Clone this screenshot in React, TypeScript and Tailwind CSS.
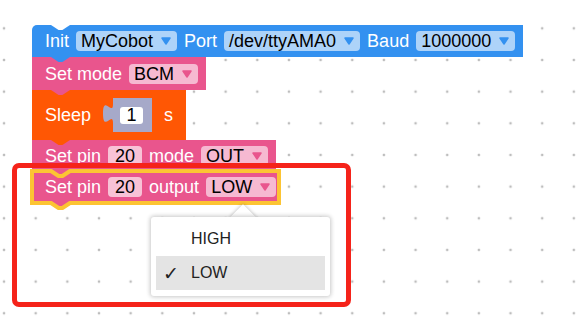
import React from "react";

const BLUE = "#3391f0";
const PINK = "#e9558d";
const ORANGE = "#ff5704";
const YELLOW = "#fcc433";

function Caret({ color }: { color: string }) {
  return (
    <svg width="10" height="8" viewBox="0 0 10 8" className="shrink-0">
      <path d="M1 1 H9 L5 7 Z" fill={color} stroke={color} strokeWidth="1.5" strokeLinejoin="round" />
    </svg>
  );
}

function Tab({ color }: { color: string }) {
  return (
    <svg width="19" height="6" viewBox="0 0 19 6" className="absolute left-[19px] top-[calc(100%-1px)] z-10">
      <path d="M0 0 L0 1 L7.6 6 L11.4 6 L19 1 L19 0 Z" fill={color} />
    </svg>
  );
}

function HiNotch({ pos }: { pos: "top" | "bottom" }) {
  return (
    <svg
      width="27"
      height="11"
      viewBox="0 -3 27 11"
      className={
        pos === "top"
          ? "absolute left-[15px] top-[-3px] z-10"
          : "absolute left-[15px] top-[calc(100%-3px)] z-10"
      }
    >
      <path d="M4.5 -3 L22.5 -3 L22.5 0 L15.4 5 L11.6 5 L4.5 0 Z" fill={PINK} />
      <path d="M0 0 L4 0 L11.6 5 L15.4 5 L23 0 L27 0" fill="none" stroke={YELLOW} strokeWidth="4" strokeLinejoin="round" />
    </svg>
  );
}

function Drop({ label, color, bg }: { label: string; color: string; bg: string }) {
  return (
    <div className={`flex h-[20px] items-center gap-[8px] rounded-[4px] pl-[5px] pr-[6px] text-black ${bg}`}>
      <span className="leading-none">{label}</span>
      <Caret color={color} />
    </div>
  );
}

function Num({ value }: { value: string }) {
  return (
    <div className="flex h-[20px] items-center rounded-[4px] bg-[#f8c2d6] px-[7px] text-black">
      <span className="leading-none">{value}</span>
    </div>
  );
}

function Socket() {
  return (
    <div className="relative flex h-[34px] w-[49px] items-center pl-[17px]">
      <svg width="49" height="34" viewBox="0 0 49 34" className="absolute inset-0">
        <path
          d="M49 0 H10 V6 c0 12.7 -10 -10.1 -10 9.5 s10 -3.2 10 9.5 V34 H49 Z"
          fill="#a6a9c9"
        />
      </svg>
      <div className="relative flex h-[17px] w-[23px] items-center justify-center rounded-[3px] bg-white text-black">
        <span className="leading-none">1</span>
      </div>
    </div>
  );
}

export default function App() {
  return (
    <div className="relative h-[323px] w-[587px] overflow-hidden bg-white bg-[radial-gradient(circle,#bdbdbd_1px,transparent_1.7px)] bg-[length:31.67px_31.67px] bg-[position:-11.8px_12.5px] font-['Liberation_Sans',Arial,sans-serif] text-[18px]">
      <div className="flex flex-col items-start pl-[32px] pt-[25px]">
        {/* Init */}
        <div className="relative flex h-[32px] w-fit items-center gap-[7px] rounded-tl-[5px] bg-[#3391f0] pl-[13px] pr-[8px] text-white">
          <svg width="19" height="5" viewBox="0 0 19 5" className="absolute left-[19px] top-0">
            <path d="M0 0 L7.6 5 L11.4 5 L19 0 Z" fill="#ffffff" />
          </svg>
          <span className="leading-none">Init</span>
          <Drop label="MyCobot" color={BLUE} bg="bg-[#add3f9]" />
          <span className="leading-none">Port</span>
          <Drop label="/dev/ttyAMA0" color={BLUE} bg="bg-[#add3f9]" />
          <span className="leading-none">Baud</span>
          <Drop label="1000000" color={BLUE} bg="bg-[#add3f9]" />
          <Tab color={BLUE} />
        </div>

        {/* Set mode */}
        <div className="relative flex h-[33px] w-fit items-center gap-[7px] bg-[#e9558d] pl-[13px] pr-[8px] text-white">
          <span className="leading-none">Set mode</span>
          <Drop label="BCM" color={PINK} bg="bg-[#f6b9d1]" />
          <Tab color={PINK} />
        </div>

        {/* Sleep */}
        <div className="relative flex h-[50px] w-fit items-center gap-[12px] bg-[#ff5704] pl-[13px] pr-[13px] text-white">
          <span className="leading-none">Sleep</span>
          <Socket />
          <span className="leading-none">s</span>
          <Tab color={ORANGE} />
        </div>

        {/* Set pin mode */}
        <div className="relative flex h-[31px] w-fit items-center gap-[7px] bg-[#e9558d] pl-[13px] pr-[8px] text-white">
          <span className="leading-none">Set pin</span>
          <Num value="20" />
          <span className="leading-none">mode</span>
          <Drop label="OUT" color={PINK} bg="bg-[#f6b9d1]" />
          <Tab color={PINK} />
        </div>

        {/* Set pin output (selected) */}
        <div className="relative flex h-[32px] w-fit items-center gap-[7px] bg-[#e9558d] pl-[13px] pr-[3px] text-white shadow-[0_0_0_2px_#fcc433,inset_0_0_0_2px_#fcc433]">
          <HiNotch pos="top" />
          <span className="leading-none">Set pin</span>
          <Num value="20" />
          <span className="leading-none">output</span>
          <Drop label="LOW" color={PINK} bg="bg-[#f6b9d1]" />
          <HiNotch pos="bottom" />
        </div>
      </div>

      {/* red annotation frame */}
      <div className="absolute left-[12px] top-[163px] z-20 h-[144px] w-[339px] rounded-[7px] border-[5px] border-[#f5231a]" />

      {/* dropdown menu */}
      <div className="absolute left-[151px] top-[217px] z-30 h-[79px] w-[179px]">
        <div className="absolute left-[83px] top-[-9px] h-[18px] w-[18px] rotate-45 bg-white shadow-[0_0_4px_rgba(0,0,0,0.3)]" />
        <div className="relative flex h-full flex-col rounded-[3px] bg-white p-[5px] pb-[6px] text-[16px] text-[#222] shadow-[0_0_4px_1px_rgba(0,0,0,0.22)]">
          <div className="flex h-[34px] items-center pl-[35px]">
            <span className="leading-none">HIGH</span>
          </div>
          <div className="relative flex h-[34px] items-center bg-[#e4e4e4] pl-[35px]">
            <span className="absolute left-[7px] font-['DejaVu_Sans',sans-serif] text-[19px] leading-none">✓</span>
            <span className="leading-none">LOW</span>
          </div>
        </div>
      </div>
    </div>
  );
}
